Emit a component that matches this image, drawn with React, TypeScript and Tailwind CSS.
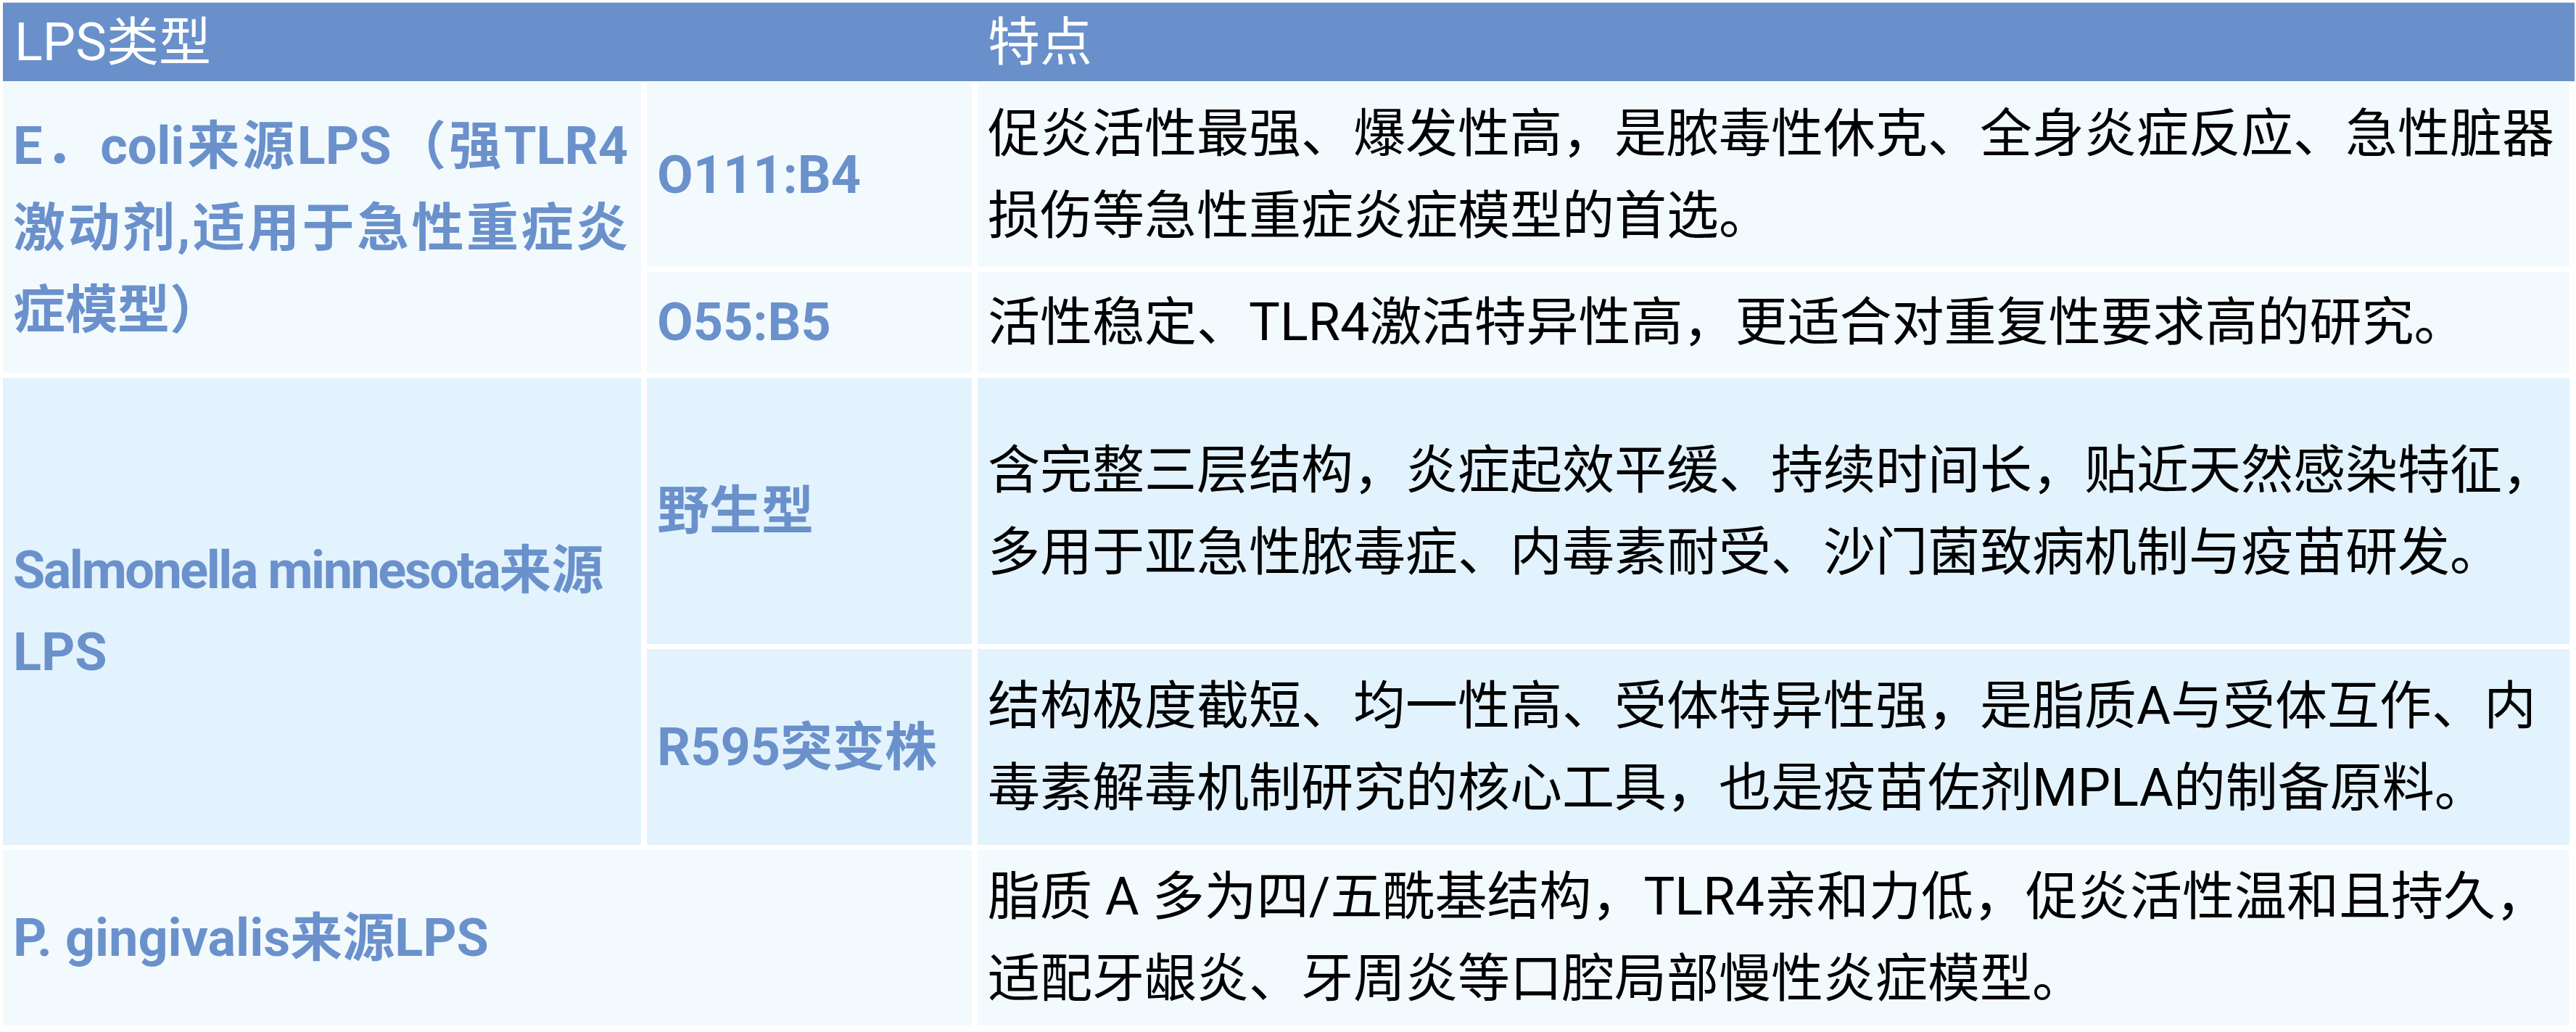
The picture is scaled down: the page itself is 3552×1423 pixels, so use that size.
const font = "font-['Roboto','Noto_Sans_CJK_SC',sans-serif]";

function Cell({
  className = "",
  children,
}: {
  className?: string;
  children: React.ReactNode;
}) {
  return (
    <div className={`flex flex-col justify-center pl-[14px] ${className}`}>
      {children}
    </div>
  );
}

const light = "bg-[#f3fafe]";
const blue = "bg-[#e3f3fd]";
const label = "font-bold text-[#6a91cb] text-justify pr-[2px]";
const desc = "text-black pr-[14px]";

export default function App() {
  return (
    <div
      className={`w-[3552px] h-[1423px] bg-white pl-[4px] pt-[3px] text-[72px] leading-[113px] ${font}`}
    >
      <div className="w-[3546px] h-[109px] border-t border-[#c9d6ea] bg-[#6990ca] flex items-center text-white">
        <div className="w-[1344px] pl-[16px]">LPS类型</div>
        <div className="pl-[14px]">特点</div>
      </div>

      <div className="mt-[2px] grid grid-cols-[880px_448px_2195px] grid-rows-[254px_139px_367px_270px_242px] gap-x-[8px] gap-y-[7px]">
        <Cell className={`${light} font-bold text-[#6a91cb] text-justify pr-[18px] row-span-2`}>
          <p>E．coli来源LPS（强TLR4激动剂,适用于急性重症炎症模型）</p>
        </Cell>
        <Cell className={`${light} ${label}`}>O111:B4</Cell>
        <Cell className={`${light} ${desc}`}>
          <p>
            促炎活性最强、爆发性高，是脓毒性休克、全身炎症反应、急性脏器损伤等急性重症炎症模型的首选。
          </p>
        </Cell>
        <Cell className={`${light} ${label}`}>O55:B5</Cell>
        <Cell className={`${light} ${desc}`}>
          <p>活性稳定、TLR4激活特异性高，更适合对重复性要求高的研究。</p>
        </Cell>

        <Cell className={`${blue} font-bold text-[#6a91cb] pr-[2px] row-span-2`}>
          <p>
            <span className="tracking-[-2.5px]">Salmonella minnesota</span>来源LPS
          </p>
        </Cell>
        <Cell className={`${blue} ${label}`}>野生型</Cell>
        <Cell className={`${blue} ${desc}`}>
          <p>
            含完整三层结构，炎症起效平缓、持续时间长，贴近天然感染特征，多用于亚急性脓毒症、内毒素耐受、沙门菌致病机制与疫苗研发。
          </p>
        </Cell>
        <Cell className={`${blue} ${label}`}>R595突变株</Cell>
        <Cell className={`${blue} ${desc}`}>
          <p>
            结构极度截短、均一性高、受体特异性强，是脂质A与受体互作、内毒素解毒机制研究的核心工具，也是疫苗佐剂MPLA的制备原料。
          </p>
        </Cell>

        <Cell className={`${light} ${label} col-span-2`}>
          <p>P. gingivalis来源LPS</p>
        </Cell>
        <Cell className={`${light} ${desc}`}>
          <p>
            脂质 A 多为四/五酰基结构，TLR4亲和力低，促炎活性温和且持久，适配牙龈炎、牙周炎等口腔局部慢性炎症模型。
          </p>
        </Cell>
      </div>
    </div>
  );
}
